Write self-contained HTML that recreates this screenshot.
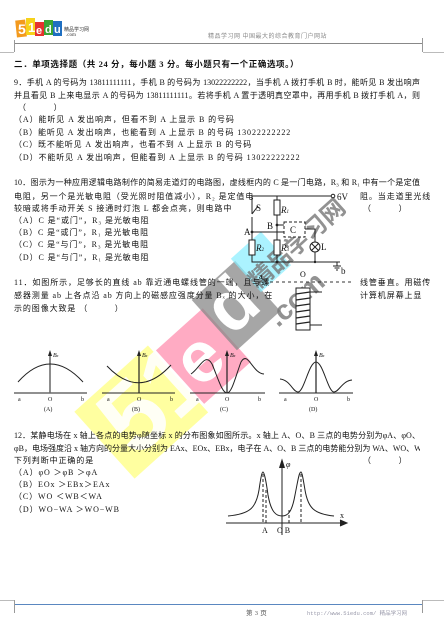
<!DOCTYPE html>
<html><head><meta charset="utf-8"><style>
*{margin:0;padding:0}
body{width:444px;height:637px;background:#fff;position:relative;overflow:hidden;font-family:"Liberation Serif","Noto Sans CJK SC",sans-serif;color:#111}
.t{position:absolute;font-size:8px;line-height:10px;white-space:nowrap;letter-spacing:0.9px}
.f{position:absolute;font-size:8px;line-height:10px;white-space:nowrap;width:406px;text-align:justify;text-align-last:justify;letter-spacing:0;overflow:hidden}
.wm{position:absolute;left:0;top:0}
</style></head><body>
<svg class="wm" width="444" height="637">
 <g transform="translate(168,388) rotate(-42) scale(0.9)">
  <rect x="-95" y="-50" width="110" height="100" fill="#ffff80" opacity="0.75"/>
  <text x="-80" y="35" font-size="110" font-weight="bold" fill="#fff" font-family="Liberation Sans" opacity="0.9">51</text>
  <rect x="18" y="-40" width="70" height="80" fill="#ff88aa" opacity="0.7"/>
  <text x="25" y="25" font-size="80" font-weight="bold" fill="#fff" font-family="Liberation Sans">e</text>
  <rect x="85" y="-55" width="65" height="75" fill="#888" opacity="0.75"/>
  <text x="90" y="5" font-size="80" font-weight="bold" fill="#fff" font-family="Liberation Sans">d</text>
  <rect x="148" y="-60" width="45" height="50" fill="#88eeff" opacity="0.7"/>
 </g>
 <text transform="translate(258,290) rotate(-42)" font-size="24" font-weight="bold" fill="#777" opacity="0.8" font-family="Noto Sans CJK SC">精品学习网</text>
 <text transform="translate(278,328) rotate(-42)" font-size="28" font-weight="bold" fill="#777" opacity="0.8" font-family="Liberation Sans">.com</text>
</svg>
<svg style="position:absolute;left:0;top:0" width="444" height="637" font-family="Liberation Serif">
 <rect x="16" y="20" width="10" height="17" fill="#f39a1e" transform="rotate(-6 21 28)"/>
 <rect x="26" y="18" width="9" height="17" fill="#f6d21a"/>
 <rect x="35" y="22" width="9" height="14" fill="#e5322d"/>
 <rect x="44" y="20" width="9" height="15" fill="#3aa535"/>
 <rect x="53" y="21" width="9" height="15" fill="#1f6fc1"/>
 <text x="18" y="34" font-size="14" fill="#fff" font-weight="bold" font-family="Liberation Sans">5</text>
 <text x="28" y="32" font-size="13" fill="#fff" font-weight="bold" font-family="Liberation Sans">1</text>
 <text x="36" y="34" font-size="11" fill="#fff" font-weight="bold" font-family="Liberation Sans">e</text>
 <text x="45" y="33" font-size="11" fill="#fff" font-weight="bold" font-family="Liberation Sans">d</text>
 <text x="54" y="33" font-size="11" fill="#fff" font-weight="bold" font-family="Liberation Sans">u</text>
 <text x="64" y="31" font-size="5" fill="#333" font-family="Noto Sans CJK SC">精品学习网</text>
 <text x="66" y="36" font-size="5" fill="#333">.com</text>
 <line x1="14" y1="43.5" x2="423" y2="43.5" stroke="#888"/>
 <line x1="14.5" y1="40" x2="14.5" y2="52" stroke="#999"/>
 <line x1="422.5" y1="38" x2="422.5" y2="52" stroke="#999"/>
 <line x1="0" y1="52.5" x2="14" y2="52.5" stroke="#bbb"/>
 <line x1="423" y1="52.5" x2="444" y2="52.5" stroke="#bbb"/>
 <line x1="14" y1="604.5" x2="423" y2="604.5" stroke="#5a87c0"/>
 <line x1="14.5" y1="600" x2="14.5" y2="613" stroke="#999"/>
 <line x1="422.5" y1="600" x2="422.5" y2="613" stroke="#999"/>
 <line x1="0" y1="600.5" x2="14" y2="600.5" stroke="#bbb"/>
 <line x1="423" y1="600.5" x2="444" y2="600.5" stroke="#bbb"/>
 <g stroke="#222" stroke-width="1" fill="none">
  <polyline points="252,214 252,196 331,196"/>
  <circle cx="333" cy="196" r="1.8"/>
  <line x1="252" y1="214" x2="258" y2="206"/>
  <polyline points="252,217 252,262 340,262"/>
  <rect x="249" y="240" width="6" height="15" fill="#fff"/>
  <line x1="277" y1="196" x2="277" y2="262"/>
  <rect x="274" y="200" width="6" height="15" fill="#fff"/>
  <rect x="274" y="240" width="6" height="15" fill="#fff"/>
  <line x1="277" y1="225" x2="284" y2="225"/>
  <line x1="252" y1="232" x2="284" y2="232"/>
  <rect x="284" y="222" width="21" height="15" stroke-dasharray="3,2" fill="#fff"/>
  <polyline points="305,229 315,229 315,262"/>
  <circle cx="315" cy="247" r="5" fill="#fff"/>
  <line x1="311.5" y1="243.5" x2="318.5" y2="250.5"/>
  <line x1="318.5" y1="243.5" x2="311.5" y2="250.5"/>
  <line x1="337" y1="262" x2="337" y2="266"/>
  <line x1="333" y1="266" x2="341" y2="266"/>
  <line x1="334.5" y1="268" x2="339.5" y2="268"/>
  <line x1="336" y1="270" x2="338" y2="270"/>
 </g>
 <g fill="#222">
  <circle cx="252" cy="232" r="1.4"/><circle cx="277" cy="225" r="1.4"/><circle cx="277" cy="262" r="1.4"/><circle cx="315" cy="262" r="1.2"/>
 </g>
 <g font-size="9" fill="#111">
  <text x="337" y="200">6V</text><text x="256" y="211">S</text>
  <text x="281" y="213" font-style="italic">R<tspan font-size="5">1</tspan></text>
  <text x="267" y="229">B</text><text x="244" y="235">A</text>
  <text x="290" y="233">C</text>
  <text x="256" y="251" font-style="italic">R<tspan font-size="5">2</tspan></text>
  <text x="281" y="251" font-style="italic">R<tspan font-size="5">3</tspan></text>
  <text x="321" y="250">L</text><text x="341" y="274">b</text>
 </g>
 <line x1="258" y1="282" x2="352" y2="282" stroke="#333" stroke-dasharray="3,3"/>
 <text x="259" y="279" font-size="8">a</text><text x="300" y="277" font-size="8">O</text>
 <rect x="296" y="288" width="14" height="42" fill="#fff" stroke="#222"/>
 <g stroke="#222" stroke-width="1.3"><line x1="296" y1="294" x2="310" y2="292"/><line x1="296" y1="300" x2="310" y2="298"/><line x1="296" y1="306" x2="310" y2="304"/><line x1="296" y1="312" x2="310" y2="310"/><line x1="296" y1="318" x2="310" y2="316"/><line x1="296" y1="324" x2="310" y2="322"/></g>
 <line x1="310" y1="292" x2="322" y2="292" stroke="#222"/><line x1="310" y1="325" x2="322" y2="325" stroke="#222"/>
 <g stroke="#222" fill="none">
  <line x1="14" y1="393" x2="87" y2="393"/><line x1="50" y1="393" x2="50" y2="354" stroke="#666" stroke-width="1.5"/>
  <path d="M18,382 Q50,346 83,382"/>
  <line x1="102" y1="393" x2="175" y2="393"/><line x1="139" y1="393" x2="139" y2="354" stroke-width="1.2"/>
  <path d="M107,366 Q139,400 171,365"/>
  <line x1="190" y1="393" x2="265" y2="393"/><line x1="227" y1="393" x2="227" y2="354" stroke-width="1.2"/>
  <path d="M191,374 C200,368 205,352 212,364 C218,378 222,393 227,393 C232,393 236,375 241,362 C248,350 252,373 264,374"/>
  <line x1="279" y1="393" x2="353" y2="393"/><line x1="316" y1="393" x2="316" y2="354" stroke-width="1.2"/>
  <path d="M280,379 C290,380 293,392 298,392 C304,392 309,362 316,362 C323,362 328,392 334,392 C339,392 342,381 352,380"/>
 </g>
 <g fill="#222"><path d="M48,356 L50,350 L52,356Z"/><path d="M137,356 L139,350 L141,356Z"/><path d="M225,356 L227,350 L229,356Z"/><path d="M314,356 L316,350 L318,356Z"/></g>
 <g font-size="6" fill="#111">
  <text x="53" y="357" font-style="italic">B<tspan font-size="4">x</tspan></text><text x="142" y="357" font-style="italic">B<tspan font-size="4">x</tspan></text><text x="230" y="357" font-style="italic">B<tspan font-size="4">x</tspan></text><text x="319" y="357" font-style="italic">B<tspan font-size="4">x</tspan></text>
  <text x="18" y="401">a</text><text x="48" y="401">O</text><text x="81" y="401">b</text>
  <text x="107" y="401">a</text><text x="137" y="401">O</text><text x="170" y="401">b</text>
  <text x="196" y="401">a</text><text x="225" y="401">O</text><text x="258" y="401">b</text>
  <text x="284" y="401">a</text><text x="314" y="401">O</text><text x="347" y="401">b</text>
  <text x="44" y="411">(A)</text><text x="132" y="411">(B)</text><text x="220" y="411">(C)</text><text x="309" y="411">(D)</text>
 </g>
 <g stroke="#222" fill="none">
  <line x1="226" y1="523" x2="345" y2="523"/><path d="M340,520 L347,523 L340,526" fill="#222"/>
  <line x1="282" y1="535" x2="282" y2="462"/><path d="M279.5,468 L282,460 L284.5,468" fill="#222"/>
  <path d="M228,516 C250,514 256,508 259,490 C261,476 262,472 263,472 C264,472 266,480 268,495 C271,512 276,516 282,516 C288,516 292,512 295,495 C298,480 299,472 301,472 C302,472 303,478 305,490 C308,508 314,514 334,516"/>
  <line x1="263" y1="474" x2="263" y2="523" stroke-dasharray="3,2"/>
  <line x1="266" y1="490" x2="266" y2="523" stroke-dasharray="3,2"/>
  <line x1="289" y1="510" x2="289" y2="523" stroke-dasharray="3,2"/>
  <line x1="301" y1="474" x2="301" y2="523" stroke-dasharray="3,2"/>
 </g>
 <g font-size="8" fill="#111"><text x="286" y="467" font-style="italic">φ</text><text x="340" y="518">x</text><text x="262" y="533">A</text><text x="277" y="533">O B</text></g>
</svg>

<div class="t" style="left:208px;top:32px;font-size:6px;color:#888;letter-spacing:0.5px">精品学习网 中国最大的综合教育门户网站</div>
<div class="t" style="left:14px;top:59px;font-size:8.5px;font-weight:bold;letter-spacing:0.6px">二．单项选择题（共 24 分，每小题 3 分。每小题只有一个正确选项。）</div>

<div class="f" style="left:14px;top:78px">9．手机 A 的号码为 13811111111，手机 B 的号码为 13022222222，当手机 A 拨打手机 B 时，能听见 B 发出响声</div>
<div class="f" style="left:14px;top:91px">并且看见 B 上来电显示 A 的号码为 13811111111。若将手机 A 置于透明真空罩中，再用手机 B 拨打手机 A，则</div>
<div class="t" style="left:18px;top:103px">（　　　）</div>
<div class="t" style="left:14px;top:115px">（A）能听见 A 发出响声，但看不到 A 上显示 B 的号码</div>
<div class="t" style="left:14px;top:128px">（B）能听见 A 发出响声，也能看到 A 上显示 B 的号码 13022222222</div>
<div class="t" style="left:14px;top:140px">（C）既不能听见 A 发出响声，也看不到 A 上显示 B 的号码</div>
<div class="t" style="left:14px;top:153px">（D）不能听见 A 发出响声，但能看到 A 上显示 B 的号码 13022222222</div>

<div class="f" style="left:14px;top:178px">10．图示为一种应用逻辑电路制作的简易走道灯的电路图，虚线框内的 C 是一门电路，R₃ 和 R₁ 中有一个是定值</div>
<div class="t" style="left:14px;top:192px">电阻，另一个是光敏电阻（受光照时阻值减小），R₂ 是定值电</div>
<div class="t" style="left:360px;top:192px">阻。当走道里光线</div>
<div class="t" style="left:14px;top:204px">较暗或将手动开关 S 接通时灯泡 L 都会点亮，则电路中</div>
<div class="t" style="left:363px;top:204px">（　　　）</div>
<div class="t" style="left:14px;top:216px">（A）C 是“或门”，R₃ 是光敏电阻</div>
<div class="t" style="left:14px;top:228px">（B）C 是“或门”，R₁ 是光敏电阻</div>
<div class="t" style="left:14px;top:240px">（C）C 是“与门”，R₃ 是光敏电阻</div>
<div class="t" style="left:14px;top:253px">（D）C 是“与门”，R₁ 是光敏电阻</div>

<div class="t" style="left:14px;top:278px">11．如图所示，足够长的直线 ab 靠近通电螺线管的一端，且与螺</div>
<div class="t" style="left:360px;top:278px">线管垂直。用磁传</div>
<div class="t" style="left:14px;top:291px">感器测量 ab 上各点沿 ab 方向上的磁感应强度分量 Bₓ 的大小，在</div>
<div class="t" style="left:360px;top:291px">计算机屏幕上显</div>
<div class="t" style="left:14px;top:304px">示的图像大致是 （　　　）</div>

<div class="f" style="left:14px;top:431px">12．某静电场在 x 轴上各点的电势φ随坐标 x 的分布图象如图所示。x 轴上 A、O、B 三点的电势分别为φA、φO、</div>
<div class="f" style="left:14px;top:444px">φB，电场强度沿 x 轴方向的分量大小分别为 EAx、EOx、EBx，电子在 A、O、B 三点的电势能分别为 WA、WO、WB。</div>
<div class="t" style="left:14px;top:456px">下列判断中正确的是</div>
<div class="t" style="left:363px;top:456px">（　　　）</div>
<div class="t" style="left:14px;top:468px">（A）φO ＞φB ＞φA</div>
<div class="t" style="left:14px;top:480px">（B）EOx ＞EBx＞EAx</div>
<div class="t" style="left:14px;top:492px">（C）WO ＜WB＜WA</div>
<div class="t" style="left:14px;top:505px">（D）WO−WA ＞WO−WB</div>

<div class="t" style="left:246px;top:609px;font-size:6.5px;color:#555;letter-spacing:0.3px">第 3 页</div>
<div class="t" style="left:307px;top:609px;font-size:5.5px;color:#99a;letter-spacing:0;font-family:'Liberation Mono','Noto Sans CJK SC',monospace">http://www.51edu.com/ 精品学习网</div>
</body></html>
